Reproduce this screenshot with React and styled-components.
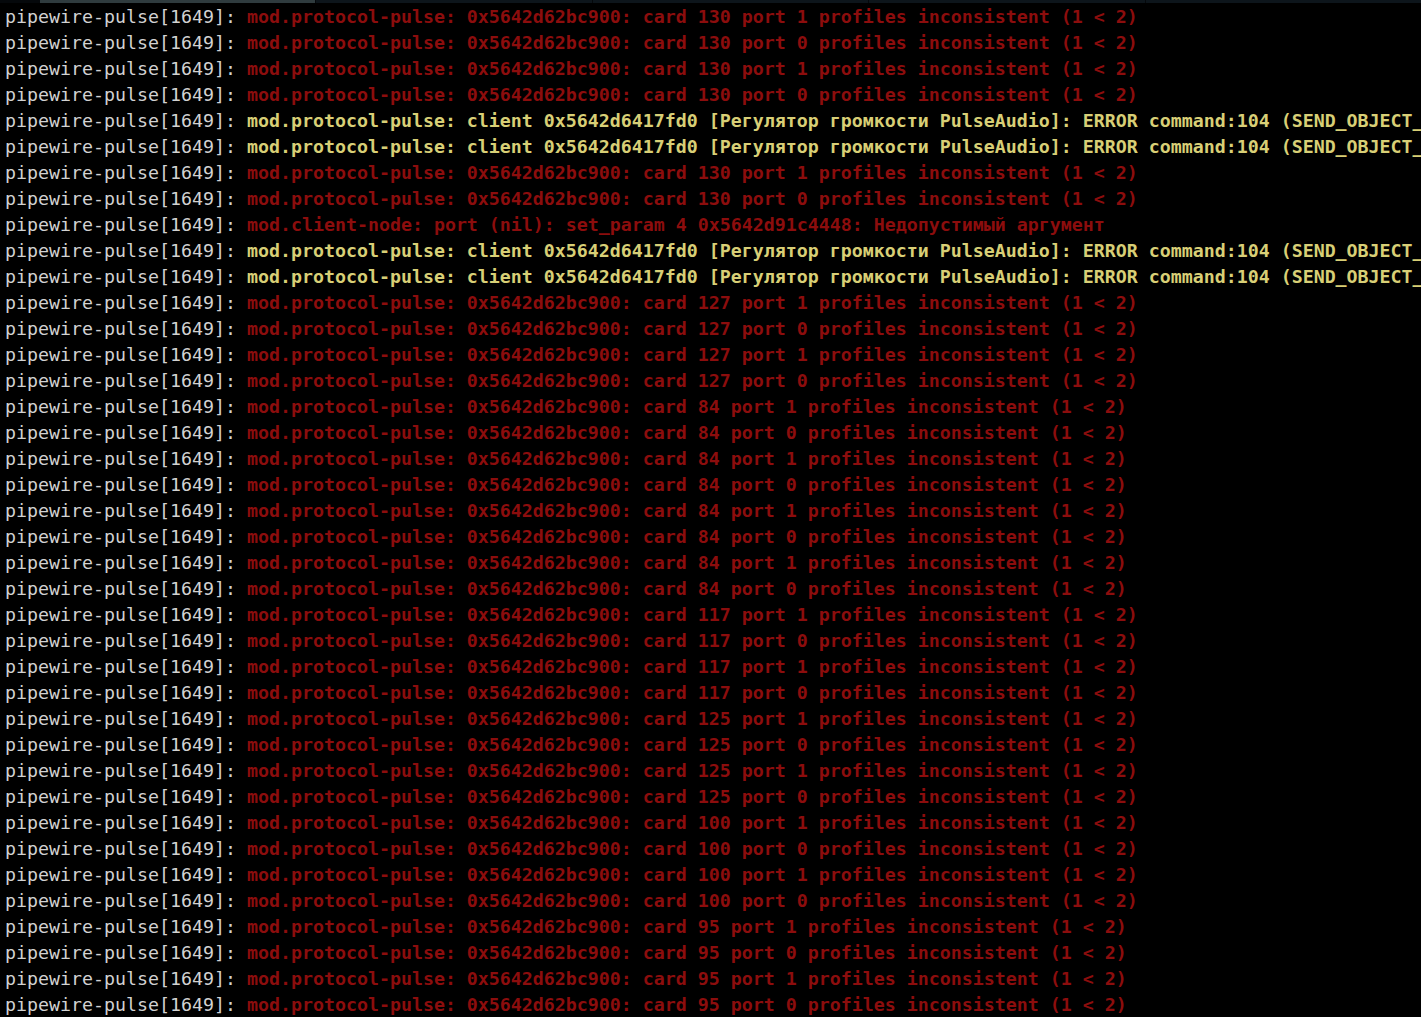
import React from 'react';
import styled, { createGlobalStyle } from 'styled-components';

const GlobalStyle = createGlobalStyle`
    html, body {
        margin: 0;
        padding: 0;
        background: #000;
    }
`;

const Terminal = styled.div`
    width: 1421px;
    height: 1017px;
    background: #000;
    overflow: hidden;
    display: flex;
    flex-direction: column;
`;

const TabStrip = styled.div`
    display: flex;
    height: 3px;
    padding-left: 40px;
    gap: 1px;
    background: #05080b;
    flex-shrink: 0;
`;

const Tab = styled.div`
    width: 320px;
    height: 100%;
    background: ${props => props.active ? '#2f3b3e' : '#0d151b'};
`;

const Log = styled.div`
    padding: 1px 0 0 5px;
    font-family: 'DejaVu Sans Mono', 'Liberation Mono', monospace;
    font-size: 18.27px;
    line-height: 26px;
`;

const Line = styled.div`
    white-space: pre;
    overflow: hidden;
`;

const Prefix = styled.span`
    color: #d2d2d2;
`;

const Message = styled.span`
    font-weight: bold;
    color: ${props => props.tone === 'warn' ? '#d8cf76' : '#8c0d0d'};
`;

const client = 'mod.protocol-pulse: client 0x5642d6417fd0 [Регулятор громкости PulseAudio]: ERROR command:104 (SEND_OBJECT_MESSAGE) tag:21 error:25 (Not implemented)';
const card = (n, p) => `mod.protocol-pulse: 0x5642d62bc900: card ${n} port ${p} profiles inconsistent (1 < 2)`;
const cards = (n) => [0, 1, 2, 3].map(i => ({ text: card(n, i % 2 ? 0 : 1) }));

const lines = [
    ...cards(130),
    { text: client, tone: 'warn' },
    { text: client, tone: 'warn' },
    { text: card(130, 1) },
    { text: card(130, 0) },
    { text: 'mod.client-node: port (nil): set_param 4 0x5642d91c4448: Недопустимый аргумент' },
    { text: client, tone: 'warn' },
    { text: client, tone: 'warn' },
    ...cards(127),
    ...cards(84),
    ...cards(84),
    ...cards(117),
    ...cards(125),
    ...cards(100),
    ...cards(95),
];

const App = () => (
    <Terminal>
        <GlobalStyle />
        <TabStrip>
            <Tab active />
            <Tab />
            <Tab />
            <Tab />
            <Tab />
        </TabStrip>
        <Log>
            {lines.map((l, i) => (
                <Line key={i}>
                    <Prefix>pipewire-pulse[1649]: </Prefix>
                    <Message tone={l.tone}>{l.text}</Message>
                </Line>
            ))}
        </Log>
    </Terminal>
);

export default App;
